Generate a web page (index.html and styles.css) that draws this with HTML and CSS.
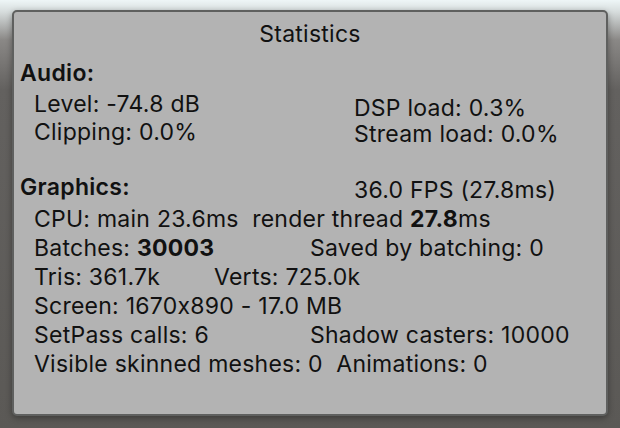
FILE: index.html
```html
<!DOCTYPE html>
<html>
<head>
<meta charset="utf-8">
<link rel="stylesheet" href="styles.css">
</head>
<body>
<div class="stage">
  <div class="panel">
    <div class="title">Statistics</div>
    <div class="head">Audio:</div>
    <div class="audio">
      <div class="col">
        <div class="line">Level: -74.8 dB</div>
        <div class="line">Clipping: 0.0%</div>
      </div>
      <div class="col right">
        <div class="line">DSP load: 0.3%</div>
        <div class="line">Stream load: 0.0%</div>
      </div>
    </div>
    <div class="ghead">
      <div class="head">Graphics:</div>
      <div class="fps">36.0 FPS (27.8ms)</div>
    </div>
    <div class="gfx">
      <div class="line">CPU: main 23.6ms&nbsp; render thread <b>27.8</b>ms</div>
      <div class="line row"><span class="c1">Batches: <b>30003</b></span><span>Saved by batching: 0</span></div>
      <div class="line row"><span class="c2">Tris: 361.7k</span><span>Verts: 725.0k</span></div>
      <div class="line">Screen: 1670x890 - 17.0 MB</div>
      <div class="line row"><span class="c1">SetPass calls: 6</span><span>Shadow casters: 10000</span></div>
      <div class="line">Visible skinned meshes: 0&nbsp; Animations: 0</div>
    </div>
  </div>
</div>
</body>
</html>
```

FILE: styles.css
```css
html, body {
  margin: 0;
  padding: 0;
}
body {
  width: 620px;
  height: 428px;
  overflow: hidden;
  background: linear-gradient(to bottom, #eef6f7 0px, #d6dcdc 12px, #8a8886 40px, #63615f 90px, #5b5956 100%);
  font-family: "Inter", "Noto Sans", sans-serif;
  font-feature-settings: "calt" 0;
  color: #111111;
}
.stage {
  padding: 10px 12px 12px 12px;
  height: 406px;
}
.panel {
  box-sizing: border-box;
  width: 596px;
  height: 406px;
  background: #b3b3b3;
  border: 2px solid #5f605f;
  border-radius: 5px;
  padding: 8px 0 0 6px;
  font-size: 23px;
  line-height: 29px;
  letter-spacing: 0.25px;
  box-shadow: 0 2px 6px rgba(0,0,0,0.35);
}
.title {
  text-align: center;
  padding-right: 6px;
  height: 29px;
  margin-bottom: 10px;
}
.head {
  font-weight: 600;
  font-size: 23px;
  letter-spacing: 0.3px;
}
.audio {
  display: flex;
  padding-left: 14px;
  margin-top: 2px;
}
.audio .col {
  width: 320px;
  flex-shrink: 0;
}
.audio .right {
  width: auto;
  flex-shrink: 1;
  padding-top: 5px;
  line-height: 26px;
}
.audio .col:first-child .line + .line {
  margin-top: -1px;
}
.ghead {
  display: flex;
  margin-top: 26px;
}
.ghead .head {
  width: 334px;
  flex-shrink: 0;
}
.fps {
  padding-top: 3px;
}
.gfx {
  padding-left: 14px;
  line-height: 29px;
  margin-top: 0;
}
.row {
  display: flex;
}
.c1 {
  width: 276px;
  flex-shrink: 0;
}
.c2 {
  width: 180px;
  flex-shrink: 0;
}
b {
  font-weight: 700;
}
```
